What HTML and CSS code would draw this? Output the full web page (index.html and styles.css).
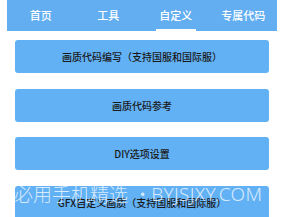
FILE: index.html
```html
<!DOCTYPE html>
<html lang="zh">
<head>
<meta charset="utf-8">
<link rel="stylesheet" href="styles.css">
</head>
<body>
<div class="page">
  <nav class="tabs">
    <div class="tab">首页</div>
    <div class="tab">工具</div>
    <div class="tab active">自定义</div>
    <div class="tab">专属代码</div>
  </nav>
  <div class="list">
    <div class="btn">画质代码编写（支持国服和国际服）</div>
    <div class="btn">画质代码参考</div>
    <div class="btn">DIY选项设置</div>
    <div class="btn">GFX自定义画质（支持国服和国际服）</div>
  </div>
  <div class="watermark"><span class="wm-cn">必用手机精选</span><span class="wm-dot">•</span><span class="wm-en">BYJSJXY.COM</span></div>
</div>
</body>
</html>
```
FILE: styles.css
```css
html, body {
  margin: 0;
  padding: 0;
  background: #ffffff;
}
.page {
  position: relative;
  width: 284px;
  height: 217px;
  overflow: hidden;
  font-family: "Noto Sans CJK SC", "Noto Sans", sans-serif;
}
.tabs {
  display: flex;
  margin: 0 7px;
  height: 31px;
  background: #62aef0;
}
.tab {
  flex: 1;
  position: relative;
  display: flex;
  align-items: center;
  justify-content: center;
  color: #ffffff;
  font-size: 11px;
  font-weight: 500;
  padding-bottom: 1px;
}
.tab.active::after {
  content: "";
  position: absolute;
  left: 14px;
  right: 14px;
  bottom: 0;
  height: 2px;
  background: #ffffff;
}
.list {
  display: flex;
  flex-direction: column;
  gap: 15.5px;
  margin: 9px 15px 0;
}
.btn {
  height: 33px;
  border-radius: 3px;
  background: #62b1f5;
  color: #1a1a1a;
  font-size: 10px;
  font-weight: 500;
  display: flex;
  align-items: center;
  justify-content: center;
}
.watermark {
  position: absolute;
  left: 14px;
  top: 180px;
  display: flex;
  align-items: center;
  font-size: 19px;
  font-weight: 300;
  color: rgba(255, 255, 255, 0.75);
  white-space: nowrap;
}
.wm-dot {
  font-family: "Noto Sans", sans-serif;
  margin: 0 5px 0 11px;
}
.wm-en {
  font-family: "Noto Sans", sans-serif;
  font-weight: 300;
  letter-spacing: 0.3px;
}
```
